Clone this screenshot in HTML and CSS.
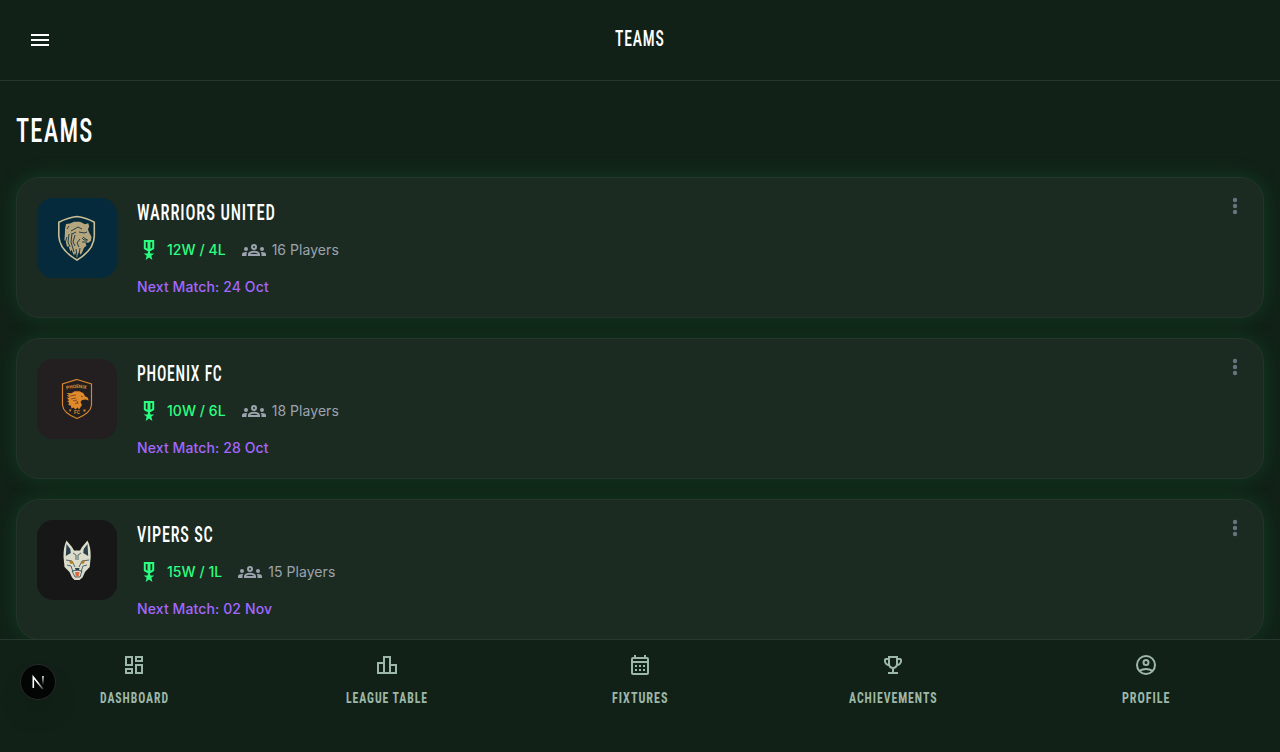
FILE: index.html
```html
<!DOCTYPE html>
<html lang="en">
<head>
<meta charset="utf-8">
<title>Teams</title>
<link rel="stylesheet" href="styles.css">
</head>
<body>
<svg class="defs" aria-hidden="true">
  <symbol id="medal" viewBox="0 0 24 24"><path fill-rule="evenodd" d="M17.200 2v8.400c0 .4-.2.7-.5.9L12.800 13.600l.7 1.900h3.700l-2.900 2.300 1.100 4.100-3.400-2.300-3.400 2.300 1.100-4.100-2.900-2.300h3.700l.7-1.900-3.900-2.300c-.3-.2-.5-.5-.5-.9V2zM8.800 4v5.800l1.700 1V4zm4.700 0v6.800l1.700-1V4z"/></symbol>
  <symbol id="groups" viewBox="0 0 24 24"><path fill-rule="evenodd" d="M12 12.750c1.630 0 3.070.390 4.240.900 1.080.480 1.760 1.560 1.760 2.730V18H6v-1.610c0-1.180.680-2.260 1.760-2.730 1.170-.520 2.610-.910 4.240-.910zM8.100 16h7.800c-.300-.600-2-1.250-3.900-1.250S8.400 15.400 8.100 16zM12 6a3 3 0 0 1 0 6 3 3 0 0 1 0-6zm0 2a1 1 0 0 0 0 2 1 1 0 0 0 0-2zM4 13a2 2 0 1 0 0-4 2 2 0 0 0 0 4zm1.130 1.100A7 7 0 0 0 1.220 14.580C.480 14.900 0 15.620 0 16.430V18h4.500v-1.610c0-.830.230-1.610.630-2.290zM20 13a2 2 0 1 0 0-4 2 2 0 0 0 0 4zm4 3.430c0-.810-.480-1.530-1.220-1.850a7 7 0 0 0-3.910-.480c.400.680.630 1.460.630 2.290V18H24z"/></symbol>
  <symbol id="more" viewBox="0 0 24 24"><circle cx="12" cy="6" r="2.200"/><circle cx="12" cy="12" r="2.200"/><circle cx="12" cy="18" r="2.200"/></symbol>
</svg>

<header class="topbar">
  <button class="menu" aria-label="Menu"><svg class="icon" viewBox="0 0 24 24"><path d="M3 18h18v-2H3zm0-5h18v-2H3zm0-7v2h18V6z"/></svg></button>
  <svg class="display topbar-title" width="50" height="24"><text x="0" y="18.600" textLength="49.500" lengthAdjust="spacingAndGlyphs">TEAMS</text></svg>
</header>

<main class="content">
  <h1 class="heading"><svg class="display" width="90" height="40"><text x="0" y="33" textLength="77.500" lengthAdjust="spacingAndGlyphs">TEAMS</text></svg></h1>
  <section class="cards">
    <article class="card">
      <svg class="crest crest-blue" viewBox="0 0 80 80">
        <path class="gold-line" d="M40 18.500Q49 19.500 57.300 24.200V38Q57 52 40 62Q22.500 52 21.800 38V24.200Q31 19.500 40 18.500Z"/>
        <path class="gold" d="M28 31l1-5 4-.5 4-1.800h6l5 2.500 3.200-1 1 3-1.200 3 1 3 2.500 4.500-.5 4-2.500 2h-3l1 3-2.500 2-2 5-1.500 2-1.500-3-2 6-2-5-1 3-2.500-6-1 2-2.200-6-1.200 1.500-1.400-6-1.300-1 .5-7z"/>
        <path class="blue-line" d="M30 31l2-3m2 5 7-4 4 2m-10 5 4-2m3 0 5 1 3-1m-4 5 4 3m-7-1-3 4 2 4m-12-10-2 6m4-9-1 8 2 5m2-14-1 9 3 10m1-17-2 7 2 4m1 3 1 7m3-8-1 7m3-17 2 2 4 0m-1 2-5 0"/>
      </svg>
      <div class="info">
        <h2 class="name"><svg class="display" width="144" height="28"><text x="0" y="22" textLength="138.700" lengthAdjust="spacingAndGlyphs">WARRIORS UNITED</text></svg></h2>
        <div class="stats">
          <span class="stat record"><svg class="icon"><use href="#medal"/></svg>12W / 4L</span>
          <span class="stat players"><svg class="icon"><use href="#groups"/></svg>16 Players</span>
        </div>
        <p class="next">Next Match: 24 Oct</p>
      </div>
      <button class="more" aria-label="Options"><svg class="icon"><use href="#more"/></svg></button>
    </article>
    <article class="card">
      <svg class="crest crest-brown" viewBox="0 0 80 80">
        <path class="orange-line" d="M40 20.500 54.500 25V46Q54 54 40 59.500Q26 54 25.500 46V25Z"/>
        <path id="arch" fill="none" d="M29.500 30.500Q40 27.500 51 30.500"/>
        <text class="crest-text" textLength="20"><textPath href="#arch">PHOENIX</textPath></text>
        <path class="orange" d="M29.500 34l5 .3 3-2h5l4 2 1.500 3 2.700 1.200 1 3-3-1-3.700.500-1.500 2 1.500 3-2 3-1 1.500-1.500-2-2 2-2-2-2 1-.700-3-2.600-.500 1-2-2-2 2-.500-2.500-3 3 .500-3-3 3 .500z"/>
        <path class="brown-line" d="M33 37l6-1m-5 4 5-1m-3 3 4-1m-2 4 3-2m3-6 2 1m-6 4 1 3"/>
        <text class="crest-text" x="40" y="55" text-anchor="middle">FC</text>
        <path class="orange" d="M32 50.500h2.500l-1.500 2.500zm14.500 0h2v2h-2z"/>
      </svg>
      <div class="info">
        <h2 class="name"><svg class="display" width="90" height="28"><text x="0" y="22" textLength="85.500" lengthAdjust="spacingAndGlyphs">PHOENIX FC</text></svg></h2>
        <div class="stats">
          <span class="stat record"><svg class="icon"><use href="#medal"/></svg>10W / 6L</span>
          <span class="stat players"><svg class="icon"><use href="#groups"/></svg>18 Players</span>
        </div>
        <p class="next">Next Match: 28 Oct</p>
      </div>
      <button class="more" aria-label="Options"><svg class="icon"><use href="#more"/></svg></button>
    </article>
    <article class="card">
      <svg class="crest crest-black" viewBox="0 0 80 80">
        <path class="wolf" d="M29.500 20.500 35 27l2 3.500h6l2-3.500 5.500-6.500Q54 27 53.700 37l-1 10-4.700 5-2.500 5.500-3 2.500h-5L35 57.500 32.500 52 27.500 47 26.500 37Q26.300 27 29.500 20.500Z"/>
        <path class="slate" d="M29.500 24l3.800 5 .5 4-5 3zM50.500 24l-3.800 5-.5 4 5 3zM38 48h4.500l-.7 2.500h-3z"/>
        <path class="slate-line" d="M36 33l3 2v5m5-7-3 2v5M29 40l6 1 3 6m14-7-7 1-3 6M30 45l4 1 2 6m14-7-4 1-2 6M35 51l5-1 5 1-2 6h-5z"/>
        <path class="amber" d="M32 40.500l4 1-.5 2.500-2.500-.5zM48 40.500l-4 1 .5 2.500 2.500-.5z"/>
        <path class="tongue" d="M38 52h4.500l-.8 4-1.500 1-1.500-1z"/>
      </svg>
      <div class="info">
        <h2 class="name"><svg class="display" width="84" height="28"><text x="0" y="22" textLength="76.500" lengthAdjust="spacingAndGlyphs">VIPERS SC</text></svg></h2>
        <div class="stats">
          <span class="stat record"><svg class="icon"><use href="#medal"/></svg>15W / 1L</span>
          <span class="stat players"><svg class="icon"><use href="#groups"/></svg>15 Players</span>
        </div>
        <p class="next">Next Match: 02 Nov</p>
      </div>
      <button class="more" aria-label="Options"><svg class="icon"><use href="#more"/></svg></button>
    </article>
  </section>
</main>

<nav class="tabs">
  <a class="tab"><svg class="icon" viewBox="0 0 24 24"><path fill-rule="evenodd" d="M3 3h8v10H3zm2 2v6h4V5zM13 3h8v6h-8zm2 2v2h4V5zM13 11h8v10h-8zm2 2v6h4v-6zM3 15h8v6H3zm2 2v2h4v-2z"/></svg>
    <svg class="display label" width="70" height="16"><text x="1" y="14" textLength="69" lengthAdjust="spacingAndGlyphs">DASHBOARD</text></svg></a>
  <a class="tab"><svg class="icon" viewBox="0 0 24 24"><path fill-rule="evenodd" d="M16 11V3H8v6H2v12h20V11zm-6-6h4v14h-4zm-6 6h4v8H4zm16 8h-4v-6h4z"/></svg>
    <svg class="display label" width="82" height="16"><text x="0" y="14" textLength="82" lengthAdjust="spacingAndGlyphs">LEAGUE TABLE</text></svg></a>
  <a class="tab"><svg class="icon" viewBox="0 0 24 24"><path fill-rule="evenodd" d="M19 4h-1V2h-2v2H8V2H6v2H5a2 2 0 0 0-2 2v14a2 2 0 0 0 2 2h14a2 2 0 0 0 2-2V6a2 2 0 0 0-2-2zm0 16H5V10h14zm0-12H5V6h14zM7 12h2v2H7zm4 0h2v2h-2zm4 0h2v2h-2zm-8 4h2v2H7zm4 0h2v2h-2zm4 0h2v2h-2z"/></svg>
    <svg class="display label" width="56" height="16"><text x="0" y="14" textLength="56.500" lengthAdjust="spacingAndGlyphs">FIXTURES</text></svg></a>
  <a class="tab"><svg class="icon" viewBox="0 0 24 24"><path fill-rule="evenodd" d="M19 5h-2V3H7v2H5c-1.100 0-2 .900-2 2v1c0 2.550 1.920 4.630 4.390 4.940.630 1.500 1.980 2.630 3.610 2.960V19H7v2h10v-2h-4v-3.100c1.630-.330 2.980-1.460 3.610-2.960C19.080 12.630 21 10.550 21 8V7c0-1.100-.900-2-2-2zM5 8V7h2v3.820C5.840 10.400 5 9.300 5 8zm7 6c-1.650 0-3-1.350-3-3V5h6v6c0 1.650-1.350 3-3 3zm7-6c0 1.300-.840 2.400-2 2.820V7h2z"/></svg>
    <svg class="display label" width="88" height="16"><text x="0" y="14" textLength="88.500" lengthAdjust="spacingAndGlyphs">ACHIEVEMENTS</text></svg></a>
  <a class="tab"><svg class="icon stroked" viewBox="0 0 24 24"><circle cx="12" cy="12" r="9"/><circle cx="12" cy="9.500" r="2.500"/><path d="M5.500 17.800Q8.500 16 12 16t6.500 1.800"/></svg>
    <svg class="display label" width="48" height="16"><text x="0" y="14" textLength="48.500" lengthAdjust="spacingAndGlyphs">PROFILE</text></svg></a>
</nav>

<button class="dev-badge" aria-label="Developer tools">
  <svg width="36" height="36" viewBox="0 0 36 36" fill="none">
    <defs>
      <linearGradient id="fade-a" x1="18" y1="18" x2="24" y2="25" gradientUnits="userSpaceOnUse"><stop stop-color="#fff"/><stop offset="1" stop-color="#fff" stop-opacity=".15"/></linearGradient>
      <linearGradient id="fade-b" x1="0" y1="12" x2="0" y2="21" gradientUnits="userSpaceOnUse"><stop stop-color="#fff"/><stop offset="1" stop-color="#fff" stop-opacity="0"/></linearGradient>
    </defs>
    <path d="M13.300 24V13l9.500 12" stroke="url(#fade-a)" stroke-width="1.600"/>
    <rect x="22.200" y="12" width="1.500" height="9" fill="url(#fade-b)"/>
  </svg>
</button>
</body>
</html>
```
FILE: styles.css
```css
* { box-sizing: border-box; }

body {
  margin: 0;
  height: 752px;
  overflow: hidden;
  background: #112117;
  color: #fff;
  font-family: Inter, "Liberation Sans", sans-serif;
}

button { padding: 0; border: 0; background: none; color: inherit; }
h1, h2, p { margin: 0; }
svg { display: block; flex: none; }
.defs { position: absolute; width: 0; height: 0; }
.icon { width: 24px; height: 24px; fill: currentColor; }
.stroked { fill: none; stroke: currentColor; stroke-width: 2; }

.display {
  overflow: visible;
  fill: currentColor;
  font-family: Roboto, "Liberation Sans", sans-serif;
  font-stretch: 75%;
  font-weight: 500;
  letter-spacing: .05em;
}

.topbar {
  display: grid;
  grid-template-columns: 48px 1fr 48px;
  align-items: center;
  height: 81px;
  padding: 0 16px;
  border-bottom: 1px solid #28382e;
}
.menu { display: grid; place-items: center; height: 48px; }
.topbar-title { justify-self: center; margin-bottom: 2px; font-size: 21.500px; }

.content { padding: 28px 16px 0; }
.heading { height: 68px; font-size: 32.500px; }
.cards { display: flex; flex-direction: column; gap: 20px; }

.card {
  display: flex;
  gap: 20px;
  height: 141px;
  padding: 20px;
  border: 1px solid #24362b;
  border-radius: 24px;
  background: #1b2b22;
  box-shadow: 0 0 20px rgba(19, 120, 60, .3);
}
.crest { width: 80px; height: 80px; border-radius: 16px; }
.crest-blue { background: #042a3b; }
.crest-brown { background: #231f20; }
.crest-black { background: #171717; }

.gold { fill: #b5a67e; }
.gold-line { fill: none; stroke: #c9bd94; stroke-width: 1.600; }
.blue-line { fill: none; stroke: #123343; stroke-width: .900; }
.orange { fill: #df8a2b; }
.orange-line { fill: none; stroke: #d5852c; stroke-width: 1.200; }
.brown-line { fill: none; stroke: #5b351d; stroke-width: .700; }
.crest-text { fill: #df8a2b; font: 700 4.800px Roboto, sans-serif; }
.wolf { fill: #dcdccb; }
.slate { fill: #29404b; }
.slate-line { fill: none; stroke: #405660; stroke-width: .900; }
.amber { fill: #b77b20; }
.tongue { fill: #dc693d; }

.info { flex: 1; }
.name { height: 28px; font-size: 22px; }
.stats { display: flex; gap: 16px; margin-top: 12px; }
.stat { display: flex; align-items: center; gap: 6px; height: 24px; font-size: 14px; line-height: 20px; letter-spacing: .05px; }
.record { color: #2bff80; font-weight: 500; }
.players { color: #9ca3af; }
.next { margin-top: 15px; color: #a566ff; font-size: 14px; font-weight: 500; line-height: 20px; letter-spacing: .11px; }
.more { align-self: flex-start; margin: -4px -4px 0 0; color: #6b7280; }

.tabs {
  position: fixed;
  inset: auto 0 0;
  display: grid;
  grid-template-columns: repeat(5, 1fr);
  height: 113px;
  padding: 13px 8px 0;
  border-top: 1px solid #28382e;
  background: #112117;
}
.tab { display: flex; flex-direction: column; align-items: center; gap: 12px; color: #9db8a8; }
.label { font-size: 14.500px; font-weight: 700; letter-spacing: .08em; }

.dev-badge {
  position: fixed;
  left: 20px;
  top: 664px;
  width: 36px;
  height: 36px;
  border: 1px solid #292929;
  border-radius: 50%;
  background: #030504;
  box-shadow: 0 16px 32px -8px rgba(0, 0, 0, .24);
}
.dev-badge svg { margin: -1px; }
```
